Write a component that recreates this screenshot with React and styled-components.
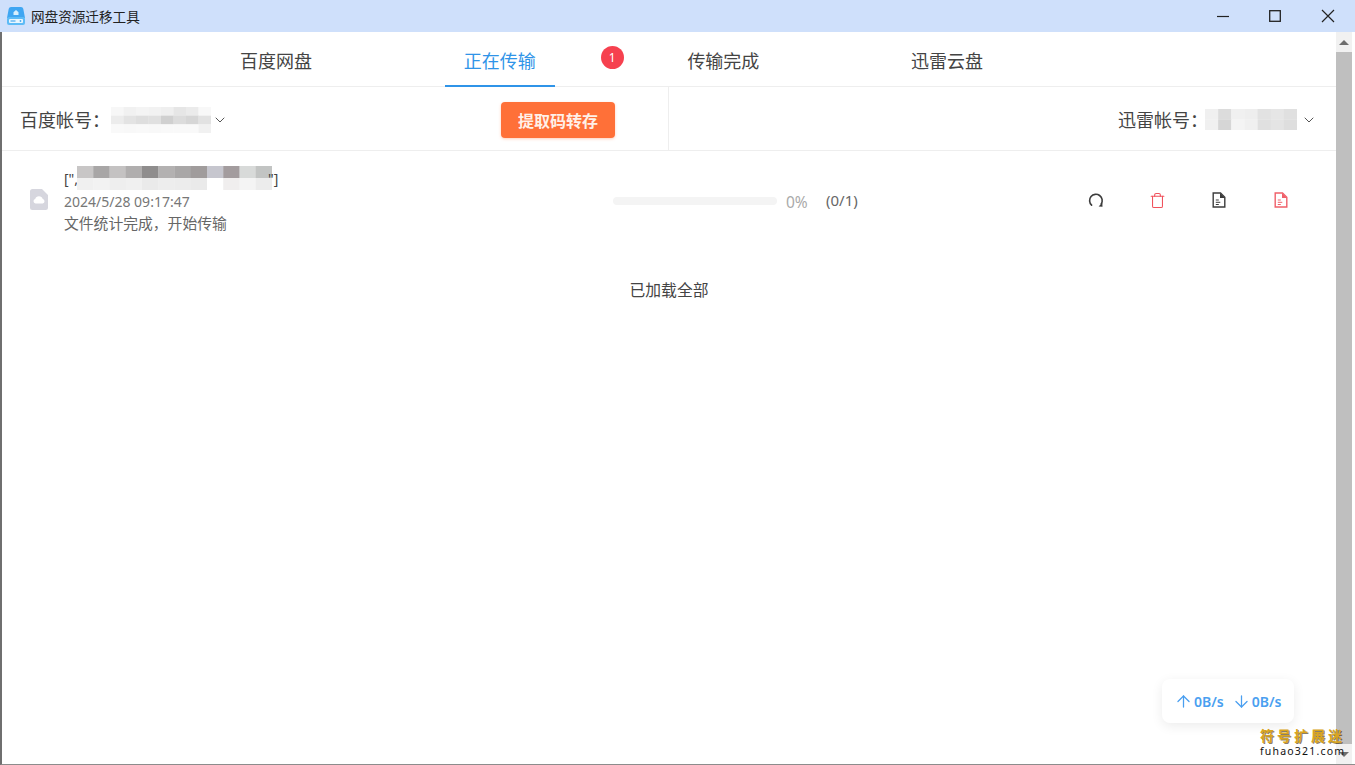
import React from "react";
import styled, { createGlobalStyle } from "styled-components";
import { ArrowUp, ArrowDown, ChevronDown, Trash } from "lucide-react";

const tabs = [
  { label: "百度网盘" },
  { label: "正在传输", active: true, badge: 1 },
  { label: "传输完成" },
  { label: "迅雷云盘" },
];

// pixelated parts of the screenshot (grey levels per cell)
const baiduAccount = [
  ["f7f7f7", "f1f1f1", "f4f4f4", "f2f2f2", "efefef", "e6e6e6", "ebebeb", "f8f8f8"],
  ["ececec", "e3e3e3", "dedede", "e0e0e0", "d0d0d0", "dcdcdc", "d6d6d6", "e2e2e2"],
  ["f9f9f9", "f8f8f8", "f9f9f9", "f8f8f8", "f9f9f9", "f9f9f9", "f9f9f9", "f1f1f1"],
];
const xunleiAccount = [
  ["f0f0f0", "dcdcdc", "f0f0f0", "eeeeee", "e2e2e2", "e6e6e6", "e0e0e0"],
  ["f0f0f0", "d6d6d6", "f4f4f4", "f0f0f0", "e0e0e0", "e4e4e4", "dedede"],
];
const titleBlur = [
  ["c8c6c6", "a8a6a6", "c4c2c2", "b0aeae", "8f8d8d", "b3b1b1", "a9a7a7", "a09c9c", "c6c6ce", "a39c9e", "d8dad9", "c2c4c3"],
  ["f0f0f0", "f2f2f2", "eeeeee", "f0f0f0", "eaeaea", "ededed", "ececec", "eaeaea", "ffffff", "f0eeee", "f4f4f4", "ececec"],
];

const Mosaic = ({ cells, width, height, className }) => {
  const rows = cells.length;
  const cols = cells[0].length;
  return (
    <MosaicBox className={className} width={width} height={height} viewBox={`0 0 ${cols} ${rows}`} preserveAspectRatio="none">
      {cells.map((row, y) =>
        row.map((c, x) => <rect key={`${x}-${y}`} x={x} y={y} width="1.02" height="1.02" fill={`#${c}`} />)
      )}
    </MosaicBox>
  );
};

const AppLogo = () => (
  <svg width="18" height="20" viewBox="0 0 18 20">
    <path d="M4 1h10c1.2 0 2 .8 2.300 2L18 12H0L1.700 3C2 1.800 2.800 1 4 1z" fill="#3fa6f2" />
    <rect x="0" y="11" width="18" height="8" rx="2" fill="#5dbbf6" />
    <rect x="2" y="13" width="14" height="4" rx="1" fill="#e8f6fe" />
    <rect x="3.500" y="14.400" width="5" height="1.200" fill="#4aa8ee" />
    <circle cx="13.500" cy="15" r="0.900" fill="#4aa8ee" />
    <path d="M6.500 9V6.300L9 4l2.500 2.300V9z" fill="#d8effd" />
  </svg>
);

const RefreshIcon = () => (
  <svg width="16" height="16" viewBox="0 0 16 16" fill="none">
    <path d="M3.600 13.200A6.300 6.300 0 1 1 13.200 12" stroke="#3c3c3c" strokeWidth="1.600" strokeLinecap="round" />
    <path d="M10.600 14.400l3.900.4-.2-4z" fill="#3c3c3c" />
  </svg>
);

const DocIcon = ({ color }) => (
  <svg width="14" height="16" viewBox="0 0 14 16" fill="none">
    <path d="M1.200 1h7.300l4.300 4.300V15H1.200z" stroke={color} strokeWidth="1.400" strokeLinejoin="miter" />
    <path d="M8 1v5h5z" fill={color} />
    <path d="M3.800 8h3M3.800 10.300h4.500M3.800 12.500h3" stroke={color} strokeWidth="1" />
  </svg>
);

const CloudFile = () => (
  <svg width="18" height="21" viewBox="0 0 18 21">
    <path d="M2.500 0H12l6 6v12.500a2.500 2.500 0 0 1-2.500 2.500h-13A2.500 2.500 0 0 1 0 18.500v-16A2.500 2.500 0 0 1 2.500 0z" fill="#d6d6de" />
    <path d="M5.500 14.500a2.300 2.300 0 0 1-.3-4.500 3.900 3.900 0 0 1 7.500 0 2.300 2.300 0 0 1 0 4.500z" fill="#fff" />
  </svg>
);

const App = () => (
  <Win>
    <GlobalStyle />
    <TitleBar>
      <AppTitle>
        <AppLogo />
        <span>网盘资源迁移工具</span>
      </AppTitle>
      <WinButtons>
        <WinButton>
          <svg width="12" height="12" viewBox="0 0 12 12"><path d="M0 6.500h12" stroke="#222" strokeWidth="1.200" /></svg>
        </WinButton>
        <WinButton>
          <svg width="12" height="12" viewBox="0 0 12 12"><rect x=".7" y=".7" width="10.600" height="10.600" fill="none" stroke="#222" strokeWidth="1.300" /></svg>
        </WinButton>
        <WinButton>
          <svg width="14" height="14" viewBox="0 0 14 14"><path d="M1 1l12 12M13 1L1 13" stroke="#222" strokeWidth="1.200" /></svg>
        </WinButton>
      </WinButtons>
    </TitleBar>
    <Body>
      <Main>
        <Tabs>
          {tabs.map((tab) => (
            <Tab key={tab.label} $active={tab.active}>
              {tab.label}
              {tab.badge && <Badge>{tab.badge}</Badge>}
            </Tab>
          ))}
        </Tabs>
        <Toolbar>
          <LeftTools>
            <Account>
              百度帐号：
              <AccountBlur cells={baiduAccount} width={100} height={26} $shift={1} />
              <Chevron size={16} strokeWidth={1.500} $gap={1} />
            </Account>
            <ExtractButton>提取码转存</ExtractButton>
          </LeftTools>
          <RightTools>
            <Account>
              迅雷帐号：
              <AccountBlur cells={xunleiAccount} width={92} height={21} $shift={-3} />
              <Chevron size={16} strokeWidth={1.500} $gap={4} />
            </Account>
          </RightTools>
        </Toolbar>
        <TaskRow>
          <CloudFile />
          <TaskInfo>
            <TaskName>
              [&quot;,
              <NameBlur cells={titleBlur} width={195} height={24} />
              &quot;]
            </TaskName>
            <TaskDate>2024/5/28 09:17:47</TaskDate>
            <TaskStatus>文件统计完成，开始传输</TaskStatus>
          </TaskInfo>
          <ProgressTrack />
          <Percent>0%</Percent>
          <Count>(0/1)</Count>
          <Actions>
            <ActionButton><RefreshIcon /></ActionButton>
            <ActionButton><Trash size={17} color="#f0525c" strokeWidth={1.500} /></ActionButton>
            <ActionButton><DocIcon color="#3c3c3c" /></ActionButton>
            <ActionButton><DocIcon color="#f0606a" /></ActionButton>
          </Actions>
        </TaskRow>
        <LoadedAll>已加载全部</LoadedAll>
        <SpeedCard>
          <ArrowUp size={19} strokeWidth={1.600} />
          <span>0B/s</span>
          <ArrowDown size={19} strokeWidth={1.600} />
          <span>0B/s</span>
        </SpeedCard>
      </Main>
      <ScrollBar>
        <ScrollArrow />
        <ScrollThumb />
        <ScrollArrow $down />
      </ScrollBar>
    </Body>
    <Watermark>
      <WatermarkCn>符号扩展迷</WatermarkCn>
      <WatermarkEn>fuhao321.com</WatermarkEn>
    </Watermark>
  </Win>
);

export default App;

const GlobalStyle = createGlobalStyle`
  html, body {
    margin: 0;
    height: 100%;
    overflow: hidden;
    background: #fff;
  }
  * {
    box-sizing: border-box;
  }
`;

const Win = styled.div`
  position: relative;
  width: 100vw;
  height: 100vh;
  display: flex;
  flex-direction: column;
  font-family: "Noto Sans", "Noto Sans CJK SC", sans-serif;
  color: #444;
  background: #fff;
`;

const TitleBar = styled.div`
  height: 32px;
  flex: none;
  display: flex;
  align-items: center;
  justify-content: space-between;
  background: #cfe0fb;
  padding-left: 7px;
`;

const AppTitle = styled.div`
  display: flex;
  align-items: center;
  gap: 6px;
  font-size: 13.600px;
  color: #222;
`;

const WinButtons = styled.div`
  display: flex;
  height: 100%;
  padding-right: 1px;
`;

const WinButton = styled.div`
  width: 52.500px;
  display: flex;
  align-items: center;
  justify-content: center;
`;

const Body = styled.div`
  flex: 1;
  min-height: 0;
  display: flex;
  border-left: 2px solid #6f6f6f;
  border-bottom: 1px solid #8c8c8c;
  padding-right: 3px;
`;

const Main = styled.div`
  position: relative;
  flex: 1;
  min-width: 0;
`;

const Tabs = styled.div`
  height: 55px;
  display: flex;
  gap: 113.700px;
  padding-left: 219px;
  border-bottom: 1px solid #eeeeee;
`;

const Tab = styled.div`
  position: relative;
  width: 110px;
  height: 55px;
  display: flex;
  align-items: center;
  justify-content: center;
  padding-top: 2px;
  font-size: 18px;
  color: ${(props) => (props.$active ? "#2f94e8" : "#444")};
  border-bottom: 2px solid ${(props) => (props.$active ? "#2f94e8" : "transparent")};
`;

const Badge = styled.div`
  position: absolute;
  top: 14px;
  left: 156px;
  width: 23px;
  height: 23px;
  border-radius: 50%;
  background: #f6414f;
  color: #fff;
  font-size: 12px;
  display: flex;
  align-items: center;
  justify-content: center;
`;

const Toolbar = styled.div`
  height: 64px;
  display: flex;
  border-bottom: 1px solid #eeeeee;
`;

const LeftTools = styled.div`
  width: 667px;
  display: flex;
  align-items: center;
  justify-content: space-between;
  padding: 0 53px 0 18px;
  border-right: 1px solid #eeeeee;
`;

const RightTools = styled.div`
  flex: 1;
  display: flex;
  align-items: center;
  justify-content: flex-end;
  padding-right: 19px;
`;

const Account = styled.div`
  display: flex;
  align-items: center;
  font-size: 18px;
  color: #444;
  white-space: nowrap;
`;

const MosaicBox = styled.svg`
  display: block;
  flex: none;
`;

const AccountBlur = styled(Mosaic)`
  margin-top: 2px;
  margin-left: ${(props) => props.$shift}px;
`;

const NameBlur = styled(Mosaic)`
  margin-right: -4px;
  margin-left: -1px;
`;

const Chevron = styled(ChevronDown)`
  margin-top: 3px;
  margin-left: ${(props) => props.$gap}px;
  color: #555;
`;

const ExtractButton = styled.div`
  width: 114px;
  height: 36px;
  margin-top: 2px;
  border-radius: 4px;
  background: #ff7038;
  color: #fff0e8;
  font-size: 16px;
  font-weight: 700;
  display: flex;
  align-items: center;
  justify-content: center;
  box-shadow: 0 1px 3px rgba(255, 112, 56, 0.35);
`;

const TaskRow = styled.div`
  display: flex;
  align-items: center;
  padding: 15px 24px 15px 28px;
`;

const TaskInfo = styled.div`
  width: 549px;
  margin-left: 16px;
  flex: none;
  font-size: 14px;
  line-height: 23px;
`;

const TaskName = styled.div`
  display: flex;
  align-items: center;
  height: 24px;
  color: #444;
`;

const TaskDate = styled.div`
  color: #777;
`;

const TaskStatus = styled.div`
  color: #666;
  font-size: 14.800px;
  line-height: 20px;
`;

const ProgressTrack = styled.div`
  width: 164px;
  height: 8px;
  border-radius: 4px;
  background: #f4f4f4;
  flex: none;
  margin-top: 3px;
`;

const Percent = styled.div`
  margin-left: 9px;
  width: 40px;
  font-size: 15.500px;
  color: #aaa;
  margin-top: 4px;
`;

const Count = styled.div`
  font-size: 15px;
  color: #666;
  margin-top: 1px;
`;

const Actions = styled.div`
  margin-left: auto;
  margin-top: 1px;
  display: flex;
`;

const ActionButton = styled.div`
  width: 61.700px;
  display: flex;
  align-items: center;
  justify-content: center;
`;

const LoadedAll = styled.div`
  margin-top: 30px;
  text-align: center;
  font-size: 15.800px;
  color: #444;
`;

const SpeedCard = styled.div`
  position: absolute;
  right: 42px;
  bottom: 41px;
  width: 132px;
  height: 44px;
  display: flex;
  align-items: center;
  gap: 1px;
  padding-left: 12px;
  border-radius: 8px;
  background: #fff;
  color: #4a9ff0;
  font-size: 14px;
  font-weight: 600;
  box-shadow: 0 3px 12px rgba(0, 0, 0, 0.08);
  span + svg {
    margin-left: 7px;
  }
`;

const ScrollBar = styled.div`
  width: 16px;
  display: flex;
  flex-direction: column;
  background: #f1f1f1;
`;

const ScrollArrow = styled.div`
  height: 20px;
  flex: none;
  display: flex;
  align-items: center;
  justify-content: center;
  &::before {
    content: "";
    border-left: 5px solid transparent;
    border-right: 5px solid transparent;
    ${(props) => (props.$down ? "border-top" : "border-bottom")}: 5px solid #6e6e6e;
  }
`;

const ScrollThumb = styled.div`
  flex: 1;
  background: #bfbfbf;
`;

const Watermark = styled.div`
  position: absolute;
  left: 1260px;
  top: 727px;
  pointer-events: none;
`;

const WatermarkCn = styled.div`
  font-family: "Noto Sans CJK SC", sans-serif;
  font-size: 14px;
  font-weight: 700;
  letter-spacing: 3px;
  line-height: 16px;
  color: #d9a520;
  text-shadow: 1px 1px 0 rgba(60, 40, 0, 0.6);
`;

const WatermarkEn = styled.div`
  margin-top: 2px;
  font-family: "Noto Sans", sans-serif;
  font-size: 10.500px;
  letter-spacing: 1.200px;
  line-height: 12px;
  color: #111;
`;
